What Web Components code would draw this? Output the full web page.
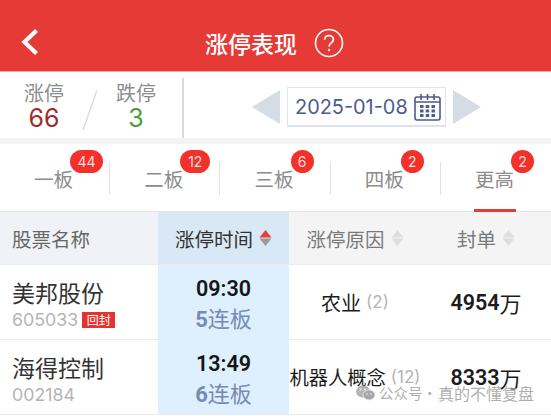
<!DOCTYPE html>
<html lang="zh"><head><meta charset="utf-8"><style>
html,body{margin:0;padding:0;background:#fff;width:551px;height:416px;overflow:hidden;font-family:"Noto Sans CJK SC","Noto Sans",sans-serif}
x-page{display:block}
</style></head><body>
<x-page>
<x-header title="涨停表现"></x-header>
<x-stats></x-stats>
<x-tabs></x-tabs>
<x-table-head></x-table-head>
<x-row name="美邦股份" code="605033" tag="回封" time="09:30" n="5" reason="农业" rc="(2)" amt="4954"></x-row>
<x-row name="海得控制" code="002184" time="13:49" n="6" reason="机器人概念" rc="(12)" amt="8333" tight></x-row>
<x-watermark></x-watermark>
</x-page>
<script>
const def=(tag,html)=>customElements.define(tag,class extends HTMLElement{
  constructor(){super();this.attachShadow({mode:'open'}).innerHTML=html(this)}
});
const CJK='"Noto Sans CJK SC","Noto Sans",sans-serif';
const NUM='Inter,"Noto Sans CJK SC",sans-serif';
const DIN='Roboto,"Noto Sans CJK SC",sans-serif';
def('x-header',el=>`<style>
:host{display:flex;height:71px;background:#e63a37;border-bottom:1px solid #f3a9a6;align-items:center;justify-content:center;position:relative;color:#fff;font:500 23px ${CJK}}
.wrap{display:flex;align-items:center;gap:17px;margin-left:-2px;margin-top:14px}
.back{position:absolute;left:20px;top:27px}
</style>
<svg class="back" width="20" height="30" viewBox="0 0 20 30"><path d="M16.5 3.5 4.5 15l12 11.5" fill="none" stroke="#fff" stroke-width="4.2"/></svg>
<div class="wrap"><span>涨停表现</span>
<svg width="30" height="30" viewBox="0 0 30 30"><circle cx="15" cy="15" r="13.5" fill="none" stroke="#fff" stroke-width="1.6"/><path d="M10.6 11.8c0-2.6 2-4.2 4.4-4.2s4.4 1.6 4.4 3.9c0 3.3-4.4 3.4-4.4 7" fill="none" stroke="#fff" stroke-width="1.7"/><circle cx="15" cy="22" r="1.2" fill="#fff"/></svg></div>`);
def('x-stats',el=>`<style>
:host{display:flex;height:66px;border-bottom:6px solid #f4f4f4;align-items:stretch;background:#fff;box-sizing:content-box}
.left{display:flex;margin-top:6px;height:60px;padding-left:24px;box-sizing:border-box;width:184px;border-right:2px solid #d9d9d9}
.stat{display:flex;flex-direction:column;align-items:center;width:40px}
.lb{font:400 20px/24px ${CJK};color:#8c8c8c;margin-top:3px}
.v{font:400 25px/29px ${NUM};margin-top:-1px}
.sl{width:52px;display:flex;justify-content:center;align-items:center;margin-top:3px}
.right{flex:1;display:flex;align-items:center;gap:7px;padding-left:68px;margin-top:4px}
.tri{width:0;height:0;border-top:17px solid transparent;border-bottom:17px solid transparent}
.date{width:159px;height:40px;box-sizing:border-box;border:1px solid #dfe3ea;border-bottom-width:2px;display:flex;align-items:center;gap:6px;padding-left:7px;font:400 19.900px ${NUM};color:#4d5b8d;white-space:nowrap}
</style>
<div class="left"><div class="stat"><span class="lb">涨停</span><span class="v" style="color:#a12c2c">66</span></div>
<div class="sl"><svg width="20" height="42" viewBox="0 0 20 42"><path d="M17 1 3 41" stroke="#dcdcdc" stroke-width="1.4"/></svg></div>
<div class="stat"><span class="lb">跌停</span><span class="v" style="color:#4f9a3a">3</span></div></div>
<div class="right"><div class="tri" style="border-right:28px solid #d5dce4"></div>
<div class="date"><span>2025-01-08</span><svg width="27" height="28" viewBox="0 0 27 28"><rect x="1" y="4" width="25" height="23" rx="2" fill="none" stroke="#4d5b8d" stroke-width="1.6"/><path d="M1 9h25M7 1v6M13.500 1v6M20 1v6" stroke="#4d5b8d" stroke-width="1.6"/><g fill="#4d5b8d"><rect x="6" y="12" width="3.500" height="3"/><rect x="11.700" y="12" width="3.500" height="3"/><rect x="17.500" y="12" width="3.500" height="3"/><rect x="6" y="16.500" width="3.500" height="3"/><rect x="11.700" y="16.500" width="3.500" height="3"/><rect x="17.500" y="16.500" width="3.500" height="3"/><rect x="6" y="21" width="3.500" height="3"/><rect x="11.700" y="21" width="3.500" height="3"/><rect x="17.500" y="21" width="3.500" height="3"/></g></svg></div>
<div class="tri" style="border-left:28px solid #d5dce4"></div></div>`);
def('x-tab',el=>`<style>
:host{flex:1;display:flex;justify-content:center;position:relative;color:#8c8c8c;font:400 19.5px/24px ${CJK}}
:host(:not(:last-child))::after{content:"";position:absolute;right:0;top:18px;height:33px;width:1px;background:#e2e2e2}
.in{position:relative;margin:23px 3px 0 0;height:44px}
.b{position:absolute;top:-17px;height:23px;min-width:23px;left:36px;box-sizing:border-box;border-radius:12px;background:#f3302a;color:#fdd;font:400 14px/23px ${NUM};text-align:center}
:host([on]) .in::after{content:"";position:absolute;left:-1px;right:-2px;bottom:-1px;height:3px;background:#e23c38}
</style><div class="in"><slot></slot><span class="b" style="${el.getAttribute('bs')||''}">${el.getAttribute('b')}</span></div>`);
def('x-tabs',el=>`<style>:host{display:flex;height:68px;background:#fff;border-bottom:1px solid #e6e6e6;box-sizing:border-box}</style>
<x-tab b="44" bs="width:33px">一板</x-tab><x-tab b="12" bs="width:30px">二板</x-tab><x-tab b="6">三板</x-tab><x-tab b="2">四板</x-tab><x-tab b="2" on>更高</x-tab>`);
const arrows=(a,b)=>`<svg width="13" height="18" viewBox="0 0 13 18"><path d="M6.500 1 12.500 8.400H.5z" fill="${a}"/><path d="M.5 9.600h12l-6 7.400z" fill="${b}"/></svg>`;
def('x-table-head',el=>`<style>
:host{display:grid;grid-template-columns:158px 131px 132px 130px;height:53px;background:#f4f4f5;font:400 19.5px ${CJK};color:#7a7a7a;border-bottom:1px solid #ececec;box-sizing:border-box}
div{display:flex;align-items:center;justify-content:center;gap:6px}
.a{justify-content:flex-start;padding-left:12px;color:#666;background:#f1f2f7}
.t{background:#d8e8f4;color:#333}
</style><div class="a">股票名称</div><div class="t">涨停时间${arrows('#e5403a','#9a9a9a')}</div><div>涨停原因${arrows('#dedede','#dedede')}</div><div>封单${arrows('#dedede','#dedede')}</div>`);
def('x-row',el=>{const g=a=>el.getAttribute(a)||'';const tight=el.hasAttribute('tight');return `<style>
:host{display:grid;grid-template-columns:158px 131px 132px 130px;height:75px;border-bottom:1px solid #e9e9e9;box-sizing:border-box;background:#fff;color:#1c1c1c}
.n{padding:3px 0 0 12px;display:flex;flex-direction:column;justify-content:center}
.name{font:400 23px/32px ${CJK};color:#333}
.code{font:400 17.800px/24px ${NUM};color:#b5b5b5;display:flex;align-items:center;gap:4px}
.tag{background:#e6332e;color:#fff;font:400 12px/16px ${CJK};padding:0 4.500px}
.t{background:#def0fe;display:flex;flex-direction:column;align-items:center;justify-content:center;margin-bottom:-1px;padding-top:1px}
.tm{font:600 21.500px/29px ${DIN};color:#151515}
.l{font:400 22px/28px ${CJK};color:#7989b5}
.l b{font:700 22px ${DIN}}
.r{display:flex;align-items:center;justify-content:center;font:400 ${tight?19.3:20}px ${CJK};white-space:nowrap;gap:5px}
.r span{color:#b5b5b5;font:400 17px ${NUM}}
.a{display:flex;align-items:center;justify-content:center;font:600 21.500px ${DIN};color:#1c1c1c}
.a i{font:400 22px ${CJK}}
</style><div class="n"><div class="name">${g('name')}</div><div class="code">${g('code')}${g('tag')?`<span class="tag">${g('tag')}</span>`:''}</div></div>
<div class="t"><div class="tm">${g('time')}</div><div class="l"><b>${g('n')}</b>连板</div></div>
<div class="r">${g('reason')}<span>${g('rc')}</span></div><div class="a">${g('amt')}<i>万</i></div>`});
def('x-watermark',el=>`<style>
:host{position:absolute;left:356px;top:383px;display:flex;align-items:center;gap:4px;font:400 14.500px/20px ${CJK};color:rgba(160,160,160,.85);white-space:nowrap}
.d{margin-left:-4px}
.s{font-size:16px;margin-left:-3px}
</style><svg width="19" height="16" viewBox="0 0 19 16"><ellipse cx="7" cy="6.500" rx="7" ry="6" fill="#b5b5b5"/><ellipse cx="13" cy="10" rx="6" ry="5" fill="#a8a8a8" stroke="#e8e8e8" stroke-width=".8"/><circle cx="4.500" cy="4.500" r="1" fill="#eee"/><circle cx="9" cy="4.500" r="1" fill="#eee"/><circle cx="11" cy="9" r=".8" fill="#eee"/><circle cx="15" cy="9" r=".8" fill="#eee"/></svg><span>公众号</span><span class="d">·</span><span class="s">真的不懂复盘</span>`);
</script>
</body></html>
